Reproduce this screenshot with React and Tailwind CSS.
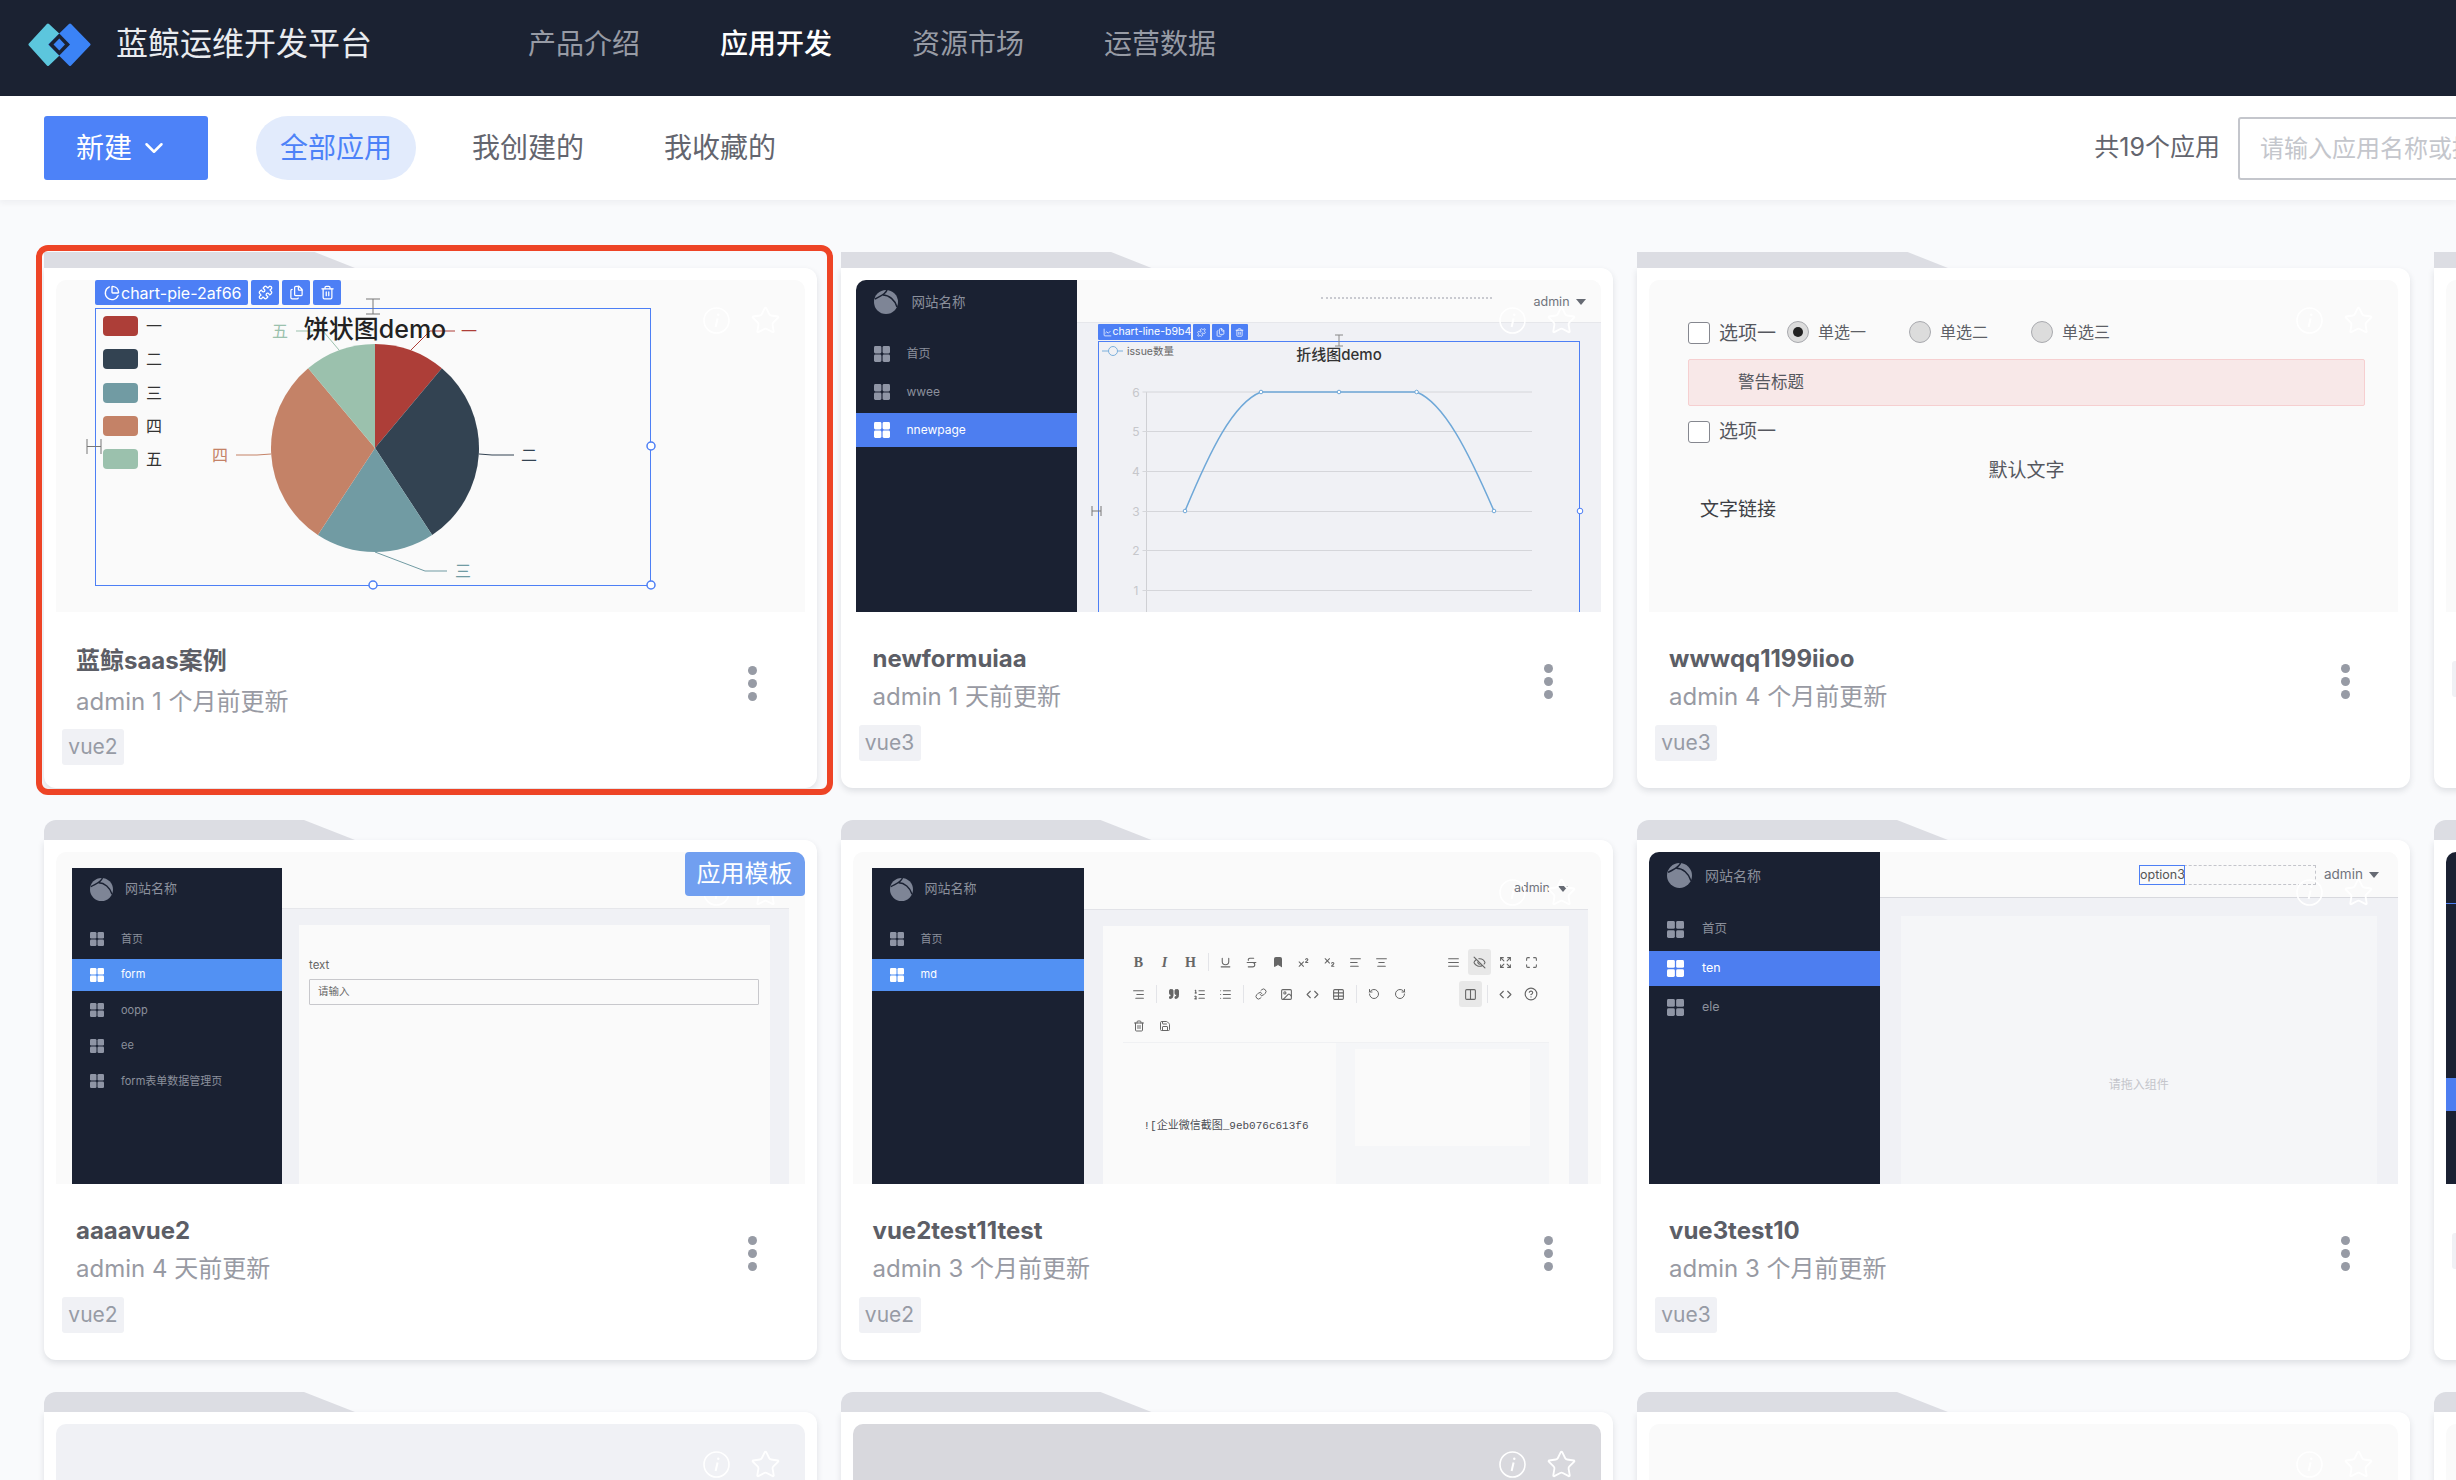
import React from "react";
import {
  AlignCenter,
  AlignJustify,
  AlignLeft,
  AlignRight,
  Bookmark,
  ChartLine,
  ChevronDown,
  CircleHelp,
  Code,
  Columns2,
  Expand,
  EyeOff,
  Files,
  Image,
  Link,
  List,
  ListOrdered,
  Maximize,
  PieChart,
  Puzzle,
  Quote,
  RotateCcw,
  RotateCw,
  Save,
  Star,
  Strikethrough,
  Subscript,
  Superscript,
  Table,
  Trash2,
  Underline,
} from "lucide-react";

const Logo = () => (
  <svg width="63" height="43" viewBox="28 22 63 43" className="shrink-0">
    <polygon points="30,43.5 48,24 69,43.5 48,63.5" fill="#5cc6dd" stroke="#5cc6dd" strokeWidth="3" strokeLinejoin="round" />
    <polygon points="50,43.5 70,24 89,43.5 70,63.5" fill="#3b83f6" stroke="#3b83f6" strokeWidth="3" strokeLinejoin="round" />
    <polygon points="59.3,32.5 70,43.5 59.3,54.5 48.5,43.5" fill="#1b2232" />
    <polygon points="59.3,37.5 65,43.5 59.3,49.5 53.5,43.5" fill="#3b83f6" />
  </svg>
);

const MiniLogo = ({ size }) => (
  <svg width={size} height={size} viewBox="0 0 24 24" className="shrink-0">
    <circle cx="12" cy="12" r="12" fill="#7e8596" />
    <path d="M1 9C6 6 11 5 13 0M9 5C15 5 21 10 23 17" stroke="#1a2132" strokeWidth="1.5" fill="none" />
  </svg>
);

const GridIcon = ({ size, active }) => (
  <svg width={size} height={size} viewBox="0 0 16 16" className="shrink-0" fill={active ? "#ffffff" : "#8f95a5"}>
    <rect x="0" y="0" width="7.4" height="7.4" rx="1.4" />
    <rect x="8.6" y="0" width="7.4" height="7.4" rx="1.4" />
    <rect x="0" y="8.6" width="7.4" height="7.4" rx="1.4" />
    <rect x="8.6" y="8.6" width="7.4" height="7.4" rx="1.4" />
  </svg>
);

const InfoIcon = ({ color }) => (
  <svg width="27" height="27" viewBox="0 0 27 27" fill="none" stroke={color} strokeWidth="1.6">
    <circle cx="13.5" cy="13.5" r="12.5" />
    <path d="M14.6 11.5L12.6 20" strokeWidth="2" />
    <circle cx="15.3" cy="7.8" r="1.2" fill={color} stroke="none" />
  </svg>
);

// sizes differ a bit between the pasted screenshots, so they come in as classes
const MiniSide = ({ items, active, width, head, item, logoSize, iconSize, nameClass, textClass, activeBg, gap, itemGap }) => (
  <div className={`${width} shrink-0 h-full bg-[#1a2132] flex flex-col`}>
    <div className={`${head} flex items-center pl-[18px] ${gap}`}>
      <MiniLogo size={logoSize} />
      <span className={`${nameClass} text-[#8b909c] whitespace-nowrap`}>网站名称</span>
    </div>
    {items.map((name) => (
      <div
        key={name}
        className={`${item} flex items-center pl-[18px] ${itemGap} ${name === active ? activeBg : ""}`}
      >
        <GridIcon size={iconSize} active={name === active} />
        <span className={`${textClass} whitespace-nowrap ${name === active ? "text-white" : "text-[#8b909c]"}`}>{name}</span>
      </div>
    ))}
  </div>
);

const Caret = () => (
  <span className="w-0 h-0 border-x-[5px] border-x-transparent border-t-[6px] border-t-[#666a73]" />
);

const ChartBar = ({ name, Icon, big }) => (
  <div className={big ? "flex gap-[3px] h-[25px] text-white" : "flex gap-[2px] h-[16px] text-white"}>
    <div
      className={
        big
          ? "bg-[#4d7ff5] rounded-[2px] w-[153px] flex items-center gap-[1px] pl-[9px] text-[16px] whitespace-nowrap"
          : "bg-[#4d7ff5] rounded-[1px] w-[93px] flex items-center gap-[1px] pl-[5px] text-[10.5px] whitespace-nowrap"
      }
    >
      <Icon size={big ? 16 : 9} className="shrink-0" />
      {name}
    </div>
    {[Puzzle, Files, Trash2].map((B, i) => (
      <div
        key={i}
        className={
          big
            ? "bg-[#4d7ff5] rounded-[2px] w-[28px] flex items-center justify-center"
            : "bg-[#4d7ff5] rounded-[1px] w-[17px] flex items-center justify-center"
        }
      >
        <B size={big ? 15 : 9} />
      </div>
    ))}
  </div>
);

const PiePreview = () => (
  <div className="h-full pl-[39px] text-[#333]">
    <ChartBar name="chart-pie-2af66" Icon={PieChart} big />
    <div className="w-[556px] h-[278px] mt-[3px] border-[1.5px] border-[#4d7ff5]">
      <svg width="555" height="277" className="overflow-visible -mt-[1.5px] -ml-[0.5px]" fontSize="16" textAnchor="middle" dominantBaseline="central">
        <path d="M279 140L279 36A104 104 0 0 1 345.85 60.33Z" fill="#ad3e38" />
        <path d="M279 140L345.85 60.33A104 104 0 0 1 336.15 226.9Z" fill="#334352" />
        <path d="M279 140L336.15 226.9A104 104 0 0 1 221.85 226.9Z" fill="#719ba3" />
        <path d="M279 140L221.85 226.9A104 104 0 0 1 212.15 60.33Z" fill="#c48267" />
        <path d="M279 140L212.15 60.33A104 104 0 0 1 279 36Z" fill="#9bc1ad" />
        <g fill="none" strokeWidth="1">
          <path d="M315 42L334 23L359 23" stroke="#ad3e38" />
          <path d="M243 42L227 23L200 23" stroke="#9bc1ad" />
          <path d="M175 146L161 147L140 147" stroke="#c48267" />
          <path d="M383 146L396 147L418 147" stroke="#334352" />
          <path d="M279 244L329 263L351 263" stroke="#719ba3" />
        </g>
        <text x="373" y="23" fill="#ad3e38">一</text>
        <text x="184" y="23" fill="#9bc1ad">五</text>
        <text x="124" y="147" fill="#c48267">四</text>
        <text x="433" y="147" fill="#334352">二</text>
        <text x="367" y="263" fill="#719ba3">三</text>
        <text x="279" y="21" fontSize="25" fontWeight="500" fill="#222">饼状图demo</text>
        {[
          ["一", "#ad3e38", 8],
          ["二", "#334352", 41],
          ["三", "#719ba3", 75],
          ["四", "#c48267", 108],
          ["五", "#9bc1ad", 141],
        ].map(([t, c, y]) => (
          <g key={t}>
            <rect x="7" y={y} width="35" height="20" rx="4" fill={c} />
            <text x="58" y={y + 10} fill="#333">{t}</text>
          </g>
        ))}
        <g fill="#fff" stroke="#4d7ff5" strokeWidth="1.5">
          <circle cx="555" cy="138" r="4" />
          <circle cx="277" cy="277" r="4" />
          <circle cx="555" cy="277" r="4" />
        </g>
        <path d="M270 -9H284M277 -9V6M270 6H284" stroke="#777" fill="none" />
        <path d="M-9 131V146M5 131V146M-9 138.500H5" stroke="#777" fill="none" />
      </svg>
    </div>
  </div>
);

const LinePreview = () => (
  <div className="flex h-full">
    <MiniSide
      items={["首页", "wwee", "nnewpage"]}
      active="nnewpage"
      width="w-[221px]"
      head="h-[44px]"
      gap="gap-[14px] mb-[13px]"
      item="h-[34px]"
      itemGap="gap-[17px] mb-[4px]"
      logoSize={24}
      iconSize={16}
      nameClass="text-[13.5px]"
      textClass="text-[12px]"
      activeBg="bg-[#4d7ef0]"
    />
    <div className="flex-1 flex flex-col">
      <div className="h-[43px] shrink-0 bg-[#fafafa] border-b border-[#e6e7eb] flex items-center pl-[244px]">
        <span className="w-[171px] border-t-2 border-dotted border-[#c9cad0] -mt-[6px]" />
        <span className="ml-[42px] text-[12.5px] text-[#70737c] mt-[2px]">admin</span>
        <span className="ml-[6px] flex mt-[2px]"><Caret /></span>
      </div>
      <div className="flex-1 bg-[#f0f1f5] pl-[21px] pt-[1px]">
        <ChartBar name="chart-line-b9b4" Icon={ChartLine} />
        <div className="w-[482px] h-[300px] mt-[1px] border border-[#4d7ff5] border-b-0">
          <svg width="482" height="300" className="overflow-visible -m-px" fontSize="12" textAnchor="middle" dominantBaseline="central">
            <text x="241" y="13" fontSize="15" fontWeight="500" fill="#333">折线图demo</text>
            <path d="M4 10H25" stroke="#7cb0dc" />
            <circle cx="15" cy="10" r="4.500" fill="#f0f1f5" stroke="#7cb0dc" />
            <text x="29" y="10" textAnchor="start" fontSize="10.500" fill="#666">issue数量</text>
            <path d="M48.500 51V300" stroke="#cfd0d4" />
            {[[6, 51], [5, 90.5], [4, 130.5], [3, 170.5], [2, 209.5], [1, 249.5]].map(([n, y]) => (
              <g key={n}>
                <path d={`M44.500 ${y}H434`} stroke="#d5d6da" strokeWidth="1" />
                <text x="38" y={y} fill="#c6c7cb">{n}</text>
              </g>
            ))}
            <path d="M87 170C112 110 135 62 163 51L318.600 51C346 62 370 110 396 170" fill="none" stroke="#6fa8d8" strokeWidth="1.500" />
            {[[87, 170], [163, 51], [241, 51], [318.6, 51], [396, 170]].map(([x, y]) => (
              <circle key={x} cx={x} cy={y} r="1.800" fill="#fff" stroke="#6fa8d8" />
            ))}
            <circle cx="482" cy="170" r="2.800" fill="#fff" stroke="#4d7ff5" />
            <path d="M237 -6H245M241 -6V5M237 5H245" stroke="#888" fill="none" />
            <path d="M-6 165V175M3 165V175M-6 170H3" stroke="#777" fill="none" />
          </svg>
        </div>
      </div>
    </div>
  </div>
);

const Check = () => <span className="w-[22px] h-[22px] rounded-[3px] border border-[#85878f] bg-white shrink-0" />;

const Radio = ({ label, on }) => (
  <div className="w-[122px] flex items-center gap-[9px]">
    <span className="w-[22px] h-[22px] rounded-full border border-[#a8a9ae] bg-[#dcdcdc] flex items-center justify-center shrink-0">
      {on && <span className="w-[10px] h-[10px] rounded-full bg-[#222]" />}
    </span>
    <span className="text-[16px] text-[#5d5f66]">{label}</span>
  </div>
);

const FormPreview = () => (
  <div className="h-full pl-[39px] pt-[42px] text-[#55575e]">
    <div className="flex items-start">
      <Check />
      <span className="ml-[9px] mt-[1px] text-[19px] leading-[22px]">选项一</span>
      <div className="flex ml-[11px] -mt-[2px]">
        <Radio label="单选一" on />
        <Radio label="单选二" />
        <Radio label="单选三" />
      </div>
    </div>
    <div className="w-[677px] h-[47px] mt-[14px] pl-[49px] flex items-center bg-[#f8e8e8] border border-[#f6cfd0] rounded-[2px] text-[16.5px]">
      警告标题
    </div>
    <div className="flex items-center mt-[15px]">
      <Check />
      <span className="ml-[9px] text-[19px] leading-[22px]">选项一</span>
    </div>
    <div className="w-[677px] mt-[16px] text-center text-[19px] leading-[24px]">默认文字</div>
    <div className="mt-[15px] pl-[12px] text-[19px] leading-[24px] text-[#3d3f45]">文字链接</div>
  </div>
);

const FormPagePreview = () => (
  <div className="flex h-full pl-[16px] pt-[16px] pr-[16px]">
    <MiniSide
      items={["首页", "form", "oopp", "ee", "form表单数据管理页"]}
      active="form"
      width="w-[210px]"
      head="h-[42px]"
      gap="gap-[12px] mb-[13px]"
      item="h-[32px]"
      itemGap="gap-[17px] mb-[3.5px]"
      logoSize={23}
      iconSize={14}
      nameClass="text-[13px]"
      textClass="text-[11px]"
      activeBg="bg-[#5291f3]"
    />
    <div className="flex-1 flex flex-col">
      <div className="h-[41px] shrink-0 border-b border-[#e6e7eb]" />
      <div className="flex-1 bg-[#f0f1f5] pl-[17px] pr-[19px] pt-[16px]">
        <div className="h-full bg-[#fafafa] pl-[10px] pr-[11px] pt-[32px]">
          <div className="text-[11.5px] leading-[16px] text-[#666]">text</div>
          <div className="h-[26px] mt-[6px] pl-[8px] flex items-center border border-[#c8c8cc] rounded-[1px] text-[10.5px] text-[#666]">
            请输入
          </div>
        </div>
      </div>
    </div>
  </div>
);

const Sep = () => (
  <span className="w-[9px] flex justify-center">
    <span className="w-px h-[18px] bg-[#e3e4e8]" />
  </span>
);

const Tool = ({ children, on }) => (
  <span className="w-[26px] h-[26px] flex items-center justify-center">
    <span className={on ? "w-[23px] h-[26px] flex items-center justify-center rounded-[3px] bg-[#e8e8e8]" : "flex items-center justify-center"}>
      {children}
    </span>
  </span>
);

const Serif = ({ children, className }) => (
  <span className={`font-['Liberation_Serif',serif] text-[14px] font-bold text-[#666] ${className || ""}`}>{children}</span>
);

const EditorPreview = () => (
  <div className="flex h-full pl-[19px] pt-[16px] pr-[13px]">
    <MiniSide
      items={["首页", "md"]}
      active="md"
      width="w-[212px]"
      head="h-[42px]"
      gap="gap-[12px] mb-[13px]"
      item="h-[32px]"
      itemGap="gap-[17px] mb-[3.5px]"
      logoSize={23}
      iconSize={14}
      nameClass="text-[13px]"
      textClass="text-[11px]"
      activeBg="bg-[#5291f3]"
    />
    <div className="flex-1 flex flex-col">
      <div className="h-[42px] shrink-0 border-b border-[#e2e3e8] flex items-center justify-end pr-[20px] text-[12.5px] text-[#70737c]">
        admin
        <span className="ml-[8px] flex"><Caret /></span>
      </div>
      <div className="flex-1 bg-[#f0f1f5] pl-[19.500px] pr-[19.500px] pt-[16px]">
        <div className="h-full bg-[#fafafa] px-[19.500px] pt-[20px] text-[#666]">
          <div className="flex items-center h-[32px] pl-[3px] pr-[5px]">
            <Tool><Serif>B</Serif></Tool>
            <Tool><Serif className="italic">I</Serif></Tool>
            <Tool><Serif>H</Serif></Tool>
            <Sep />
            <Tool><Underline size={13} /></Tool>
            <Tool><Strikethrough size={13} /></Tool>
            <Tool><Bookmark size={12} fill="#666" /></Tool>
            <Tool><Superscript size={13} /></Tool>
            <Tool><Subscript size={13} /></Tool>
            <Tool><AlignLeft size={13} /></Tool>
            <Tool><AlignCenter size={13} /></Tool>
            <span className="flex-1" />
            <Tool><AlignJustify size={13} /></Tool>
            <Tool on><EyeOff size={13} /></Tool>
            <Tool><Expand size={13} /></Tool>
            <Tool><Maximize size={13} /></Tool>
          </div>
          <div className="flex items-center h-[32px] pl-[3px] pr-[5px]">
            <Tool><AlignRight size={13} /></Tool>
            <Sep />
            <Tool><Quote size={12} fill="#666" /></Tool>
            <Tool><ListOrdered size={13} /></Tool>
            <Tool><List size={13} /></Tool>
            <Sep />
            <Tool><Link size={12} /></Tool>
            <Tool><Image size={13} /></Tool>
            <Tool><Code size={13} /></Tool>
            <Tool><Table size={13} /></Tool>
            <Sep />
            <Tool><RotateCcw size={12} /></Tool>
            <Tool><RotateCw size={12} /></Tool>
            <span className="flex-1" />
            <Tool on><Columns2 size={13} /></Tool>
            <Sep />
            <Tool><Code size={13} /></Tool>
            <Tool><CircleHelp size={14} /></Tool>
          </div>
          <div className="flex items-center h-[33px] pl-[3px] border-b border-[#f0f1f3]">
            <Tool><Trash2 size={12} /></Tool>
            <Tool><Save size={12} /></Tool>
          </div>
          <div className="flex h-[200px]">
            <div className="w-[213px] pl-[21px] pt-[75px]">
              <div className="w-[167px] whitespace-nowrap font-['Liberation_Mono','Noto_Sans_CJK_SC',monospace] text-[11px] leading-[16px] text-[#4a4c53]">
                ![企业微信截图_9eb076c613f6
              </div>
            </div>
            <div className="flex-1 bg-[#f5f6f8] px-[19px] pt-[6px]">
              <div className="h-[97px] bg-[#fafafa]" />
            </div>
          </div>
        </div>
      </div>
    </div>
  </div>
);

const EmptyPagePreview = () => (
  <div className="flex h-full">
    <MiniSide
      items={["首页", "ten", "ele"]}
      active="ten"
      width="w-[231px]"
      head="h-[46px]"
      gap="gap-[13px] mb-[14px]"
      item="h-[35px]"
      itemGap="gap-[18px] mb-[4px]"
      logoSize={25}
      iconSize={17}
      nameClass="text-[14px]"
      textClass="text-[12.5px]"
      activeBg="bg-[#4d7ef0]"
    />
    <div className="flex-1 flex flex-col">
      <div className="h-[46px] shrink-0 bg-[#fafafa] border-b border-[#d8d9de] flex items-center pl-[259px]">
        <div className="w-[177px] h-[20px] border border-dashed border-[#c4c5cb] flex">
          <span className="w-[46px] h-[20px] -mt-px -ml-px border border-[#4d7ff5] leading-[18px] text-[12.5px] text-[#555] whitespace-nowrap">option3</span>
        </div>
        <span className="ml-[8px] text-[#70737c] text-[13.5px]">admin</span>
        <span className="ml-[6px] flex"><Caret /></span>
      </div>
      <div className="flex-1 bg-[#f0f1f5] px-[21px] pt-[18px]">
        <div className="h-full bg-[#f5f6f8] pt-[160px] text-center text-[12px] text-[#c4c5cb]">请拖入组件</div>
      </div>
    </div>
  </div>
);

const DarkEdgePreview = () => (
  <div className="h-full bg-[#1a2132]">
    <div className="h-[52px] border-b border-[#4d7ef0]" />
    <div className="h-[33px] mt-[174px] bg-[#4d7ef0]" />
  </div>
);

const AppCard = ({ first, title, meta, tag, preview, bg, imageMargin, badge, selected, offset, iconColor }) => (
  <div className="relative">
    <div
      className={
        first
          ? "w-[311px] h-[16px] bg-[#dcdde3] [clip-path:polygon(0_0,87%_0,100%_100%,0_100%)]"
          : "w-[311px] h-[20px] bg-[#dcdde3] rounded-tl-[12px] [clip-path:polygon(0_0,83.6%_0,100%_100%,0_100%)]"
      }
    />
    <div className="h-[520px] bg-white rounded-b-[12px] rounded-tr-[12px] shadow-[0_3px_6px_rgba(40,45,60,0.13)] pt-[12px] overflow-hidden">
      <div className={`relative h-[332px] ${bg} ${imageMargin || "mx-[12px]"} rounded-t-[10px] overflow-hidden`}>
        {preview}
        <div className="absolute right-[24px] top-[25px] flex items-center gap-[20px]">
          <InfoIcon color={iconColor || "#ffffff"} />
          <Star size={31} strokeWidth={1.4} color={iconColor || "#ffffff"} />
        </div>
        {badge && (
          <div className="absolute top-0 right-0 w-[120px] h-[44px] bg-[#719ff0] rounded-[4px] flex items-center justify-center text-[24px] text-white">
            {badge}
          </div>
        )}
      </div>
      <div className={offset ? "flex items-start justify-between pl-[32px] pr-[60px] pt-[33px]" : "flex items-start justify-between pl-[32px] pr-[60px] pt-[31px]"}>
        <div>
          <div className="text-[24px] leading-[32px] font-bold text-[#5c5e66] whitespace-nowrap">{title}</div>
          <div className={offset ? "mt-[9px] text-[24px] leading-[32px] text-[#989aa3] whitespace-nowrap" : "mt-[6px] text-[24px] leading-[32px] text-[#989aa3] whitespace-nowrap"}>
            {meta}
          </div>
        </div>
        {title && (
          <div className="flex flex-col gap-[4px] mt-[21px]">
            <span className="w-[9px] h-[9px] rounded-full bg-[#979ba5]" />
            <span className="w-[9px] h-[9px] rounded-full bg-[#979ba5]" />
            <span className="w-[9px] h-[9px] rounded-full bg-[#979ba5]" />
          </div>
        )}
      </div>
      <div className={offset ? "ml-[18px] mt-[11px] w-[62px] h-[36px] rounded-[3px] bg-[#f0f1f5] flex items-center justify-center text-[21px] text-[#979ba5]" : "ml-[18px] mt-[12px] w-[62px] h-[36px] rounded-[3px] bg-[#f0f1f5] flex items-center justify-center text-[21px] text-[#979ba5]"}>
        {tag}
      </div>
    </div>
    {selected && (
      <div className="absolute -left-[8px] -top-[7px] w-[797px] h-[550px] border-[6px] border-[#ee4426] rounded-[12px] pointer-events-none" />
    )}
  </div>
);

export default function App() {
  return (
    <div className="w-screen h-screen overflow-hidden bg-[#f9fafc] font-[Inter,'Noto_Sans_CJK_SC',sans-serif]">
      <header className="h-[96px] bg-[#1b2232] flex items-center pl-[28px] pb-[8px]">
        <Logo />
        <span className="ml-[25px] text-[32px] text-[#e9ebef] whitespace-nowrap">蓝鲸运维开发平台</span>
        <nav className="ml-[156px] flex gap-[80px] text-[28px] text-[#979ba5]">
          <span>产品介绍</span>
          <span className="text-white font-medium">应用开发</span>
          <span>资源市场</span>
          <span>运营数据</span>
        </nav>
      </header>

      <div className="relative h-[104px] bg-white flex items-center px-[44px] shadow-[0_3px_6px_rgba(40,45,60,0.05)]">
        <button className="w-[164px] h-[64px] rounded-[3px] bg-[#4d82f8] text-white text-[28px] flex items-center pl-[32px]">
          新建
          <ChevronDown size={30} strokeWidth={2} className="ml-[7px]" />
        </button>
        <div className="ml-[48px] w-[160px] h-[64px] rounded-full bg-[#e2ebfc] text-[#4d82f8] text-[28px] flex items-center justify-center">
          全部应用
        </div>
        <div className="ml-[56px] text-[28px] text-[#63656e]">我创建的</div>
        <div className="ml-[80px] text-[28px] text-[#63656e]">我收藏的</div>
        <div className="ml-auto -mr-[226px] flex items-center shrink-0">
          <span className="text-[25px] text-[#63656e] whitespace-nowrap">共19个应用</span>
          <input
            className="ml-[18px] w-[400px] h-[63px] border-2 border-[#c4c6cc] rounded-[3px] pl-[20px] text-[24px] placeholder:text-[#c4c6cc]"
            placeholder="请输入应用名称或描述"
          />
        </div>
      </div>

      <main className="pt-[52px] pl-[44px] grid grid-cols-[repeat(4,772.5px)] gap-x-[24px] gap-y-[32px]">
        <AppCard first selected offset title="蓝鲸saas案例" meta="admin 1 个月前更新" tag="vue2" bg="bg-[#fafafa]" preview={<PiePreview />} />
        <AppCard first title="newformuiaa" meta="admin 1 天前更新" tag="vue3" bg="bg-[#fafafa]" imageMargin="ml-[15px] mr-[12px]" preview={<LinePreview />} />
        <AppCard first title="wwwqq1199iioo" meta="admin 4 个月前更新" tag="vue3" bg="bg-[#fafafa]" preview={<FormPreview />} />
        <AppCard first bg="bg-[#fafafa]" />

        <AppCard title="aaaavue2" meta="admin 4 天前更新" tag="vue2" bg="bg-[#fafafa]" badge="应用模板" preview={<FormPagePreview />} />
        <AppCard title="vue2test11test" meta="admin 3 个月前更新" tag="vue2" bg="bg-[#fafafa]" preview={<EditorPreview />} />
        <AppCard title="vue3test10" meta="admin 3 个月前更新" tag="vue3" bg="bg-[#fafafa]" preview={<EmptyPagePreview />} />
        <AppCard bg="bg-[#1a2132]" preview={<DarkEdgePreview />} />

        <AppCard bg="bg-[#f0f1f5]" />
        <AppCard bg="bg-[#d8d8dd]" />
        <AppCard bg="bg-[#fafafa]" />
        <AppCard bg="bg-[#fafafa]" />
      </main>
    </div>
  );
}
